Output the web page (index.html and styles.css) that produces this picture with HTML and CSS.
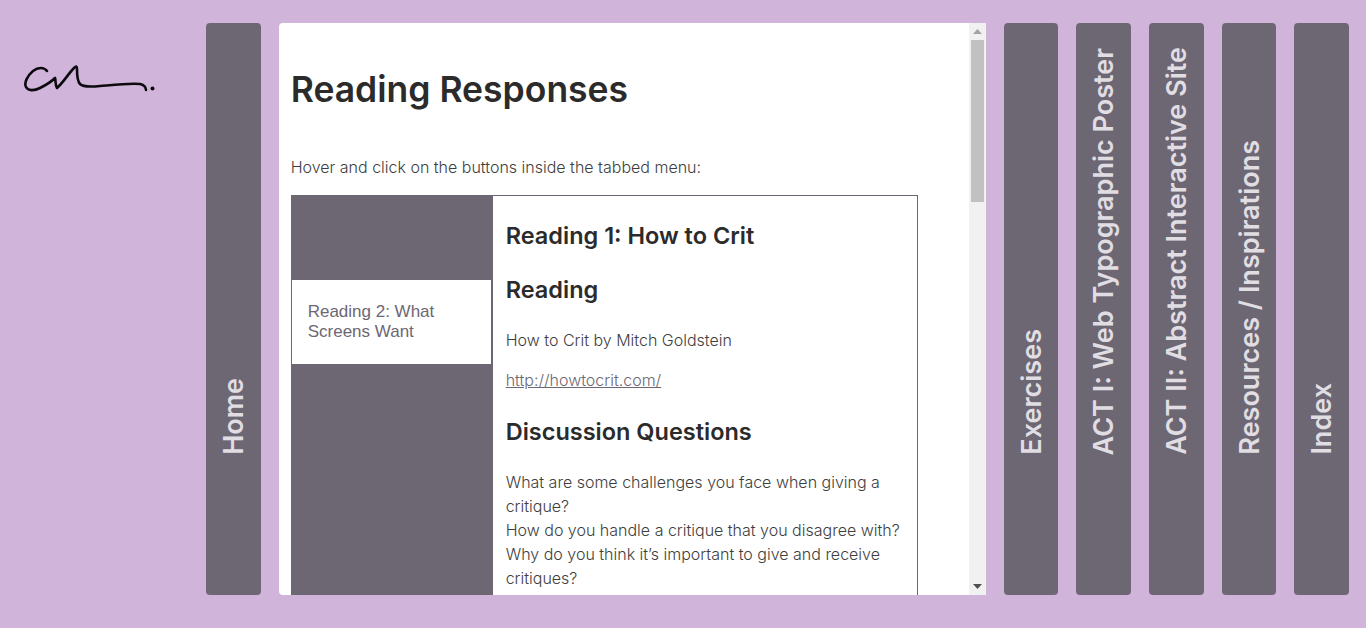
FILE: index.html
```html
<!DOCTYPE html>
<html>

<head>
  <title>Reading Responses</title>
  <meta charset="UTF-8">
  <link rel="stylesheet" href="styles.css">
</head>

<body>
  <div class="logo">
    <svg class="logo-mark" width="140" height="40" viewBox="20 60 140 40">
      <path class="ink" d="M47 71C44 67 38 67 33 71C27 76 24 83 26 87C28 91 34 91 40 88C46 85 52 81 55 78C56 81 55 85 57 88C62 84 69 73 74 68C76 66 77 66 77 69C77 75 77 81 80 84C83 87 90 87 100 86C112 85 130 83 140 84C144 85 146 87 146 90"></path>
      <circle cx="152.500" cy="88.500" r="2"></circle>
    </svg>
  </div>

  <a class="side-tab" href="#"><span>Home</span></a>

  <div class="page">
    <main class="page-body">
      <h1>Reading Responses</h1>
      <p class="intro">Hover and click on the buttons inside the tabbed menu:</p>

      <div class="tabs">
        <div class="tab-list">
          <div class="tab-btn"></div>
          <div class="tab-btn active">Reading 2: What Screens Want</div>
        </div>
        <div class="tab-pane">
          <h2>Reading 1: How to Crit</h2>
          <h2>Reading</h2>
          <p>How to Crit by Mitch Goldstein</p>
          <p><a href="#">http://howtocrit.com/</a></p>
          <h2>Discussion Questions</h2>
          <p>What are some challenges you face when giving a critique?<br>
            How do you handle a critique that you disagree with?<br>
            Why do you think it’s important to give and receive critiques?</p>
        </div>
      </div>
    </main>

    <div class="scrollbar">
      <svg class="arrow" width="17" height="17" viewBox="0 0 17 17"><path d="M8.500 6L13 11H4z" fill="#a3a3a3"></path></svg>
      <div class="thumb"></div>
      <svg class="arrow arrow-down" width="17" height="17" viewBox="0 0 17 17"><path d="M4 6H13L8.500 11z" fill="#505050"></path></svg>
    </div>
  </div>

  <a class="side-tab" href="#"><span>Exercises</span></a>
  <a class="side-tab" href="#"><span>ACT I: Web Typographic Poster</span></a>
  <a class="side-tab" href="#"><span>ACT II: Abstract Interactive Site</span></a>
  <a class="side-tab" href="#"><span>Resources / Inspirations</span></a>
  <a class="side-tab" href="#"><span>Index</span></a>
</body>

</html>
```

FILE: styles.css
```css
* {
  box-sizing: border-box;
}

html,
body {
  height: 100%;
  overflow: hidden;
}

body {
  margin: 0;
  padding: 23px 17px 33px 0;
  display: flex;
  gap: 18px;
  background-color: #d0b4da;
  font-family: "Inter", "Noto Sans", sans-serif;
  color: #2b2b2b;
}

.logo {
  width: 188px;
  flex: none;
}

.logo-mark {
  display: block;
  margin-top: 37px;
  margin-left: 20px;
}

.logo-mark .ink {
  fill: none;
  stroke: #0c0a0e;
  stroke-width: 2.6;
  stroke-linecap: round;
  stroke-linejoin: round;
}

.logo-mark circle {
  fill: #0c0a0e;
}

.side-tab {
  flex: 1 1 0;
  padding-bottom: 140px;
  display: flex;
  justify-content: center;
  align-items: flex-end;
  border-radius: 4px;
  background-color: #6d6773;
  color: #e0dde3;
  text-decoration: none;
}

.side-tab span {
  writing-mode: vertical-rl;
  transform: rotate(180deg);
  font-size: 27px;
  font-weight: 600;
  white-space: nowrap;
}

.page {
  width: 707px;
  flex: none;
  display: flex;
  background-color: #fff;
  border-radius: 4px 0 0 4px;
  overflow: hidden;
}

.page-body {
  flex: 1;
  min-width: 0;
  padding: 0 12px;
  overflow: hidden;
}

/* fake scrollbar, the headless browser hides the real one */
.scrollbar {
  width: 17px;
  flex: none;
  display: flex;
  flex-direction: column;
  background-color: #f1f1f1;
}

.arrow {
  display: block;
  flex: none;
}

.arrow-down {
  margin-top: auto;
}

.thumb {
  height: 162px;
  margin: 0 2px;
  background-color: #c1c1c1;
}

h1 {
  margin: 43px 0 0;
  padding-top: 2px;
  font-size: 35.5px;
  line-height: 44px;
  font-weight: 600;
}

.intro {
  margin: 43px 0 16px;
  font-size: 16px;
  line-height: 24px;
  font-weight: 300;
  color: #3e3e3e;
}

.tabs {
  width: 627px;
  min-height: 500px;
  display: flex;
  border: 1px solid #6d6773;
}

.tab-list {
  width: 201px;
  flex: none;
  background-color: #6d6773;
}

.tab-btn {
  height: 84px;
  padding: 22px 16px;
  font-family: "Liberation Sans", Arial, sans-serif;
  font-size: 17px;
  line-height: 20px;
  color: #6d6773;
}

.tab-btn.active {
  width: 199px;
  background-color: #fff;
}

.tab-pane {
  flex: 1;
  padding: 0 13px;
}

.tab-pane h2 {
  margin: 24px 0;
  padding-top: 2px;
  font-size: 23.5px;
  line-height: 28px;
  font-weight: 600;
}

.tab-pane p {
  margin: 16px 0;
  font-size: 16px;
  line-height: 24px;
  font-weight: 300;
  color: #3e3e3e;
}

.tab-pane a {
  color: #6d6773;
}
```
